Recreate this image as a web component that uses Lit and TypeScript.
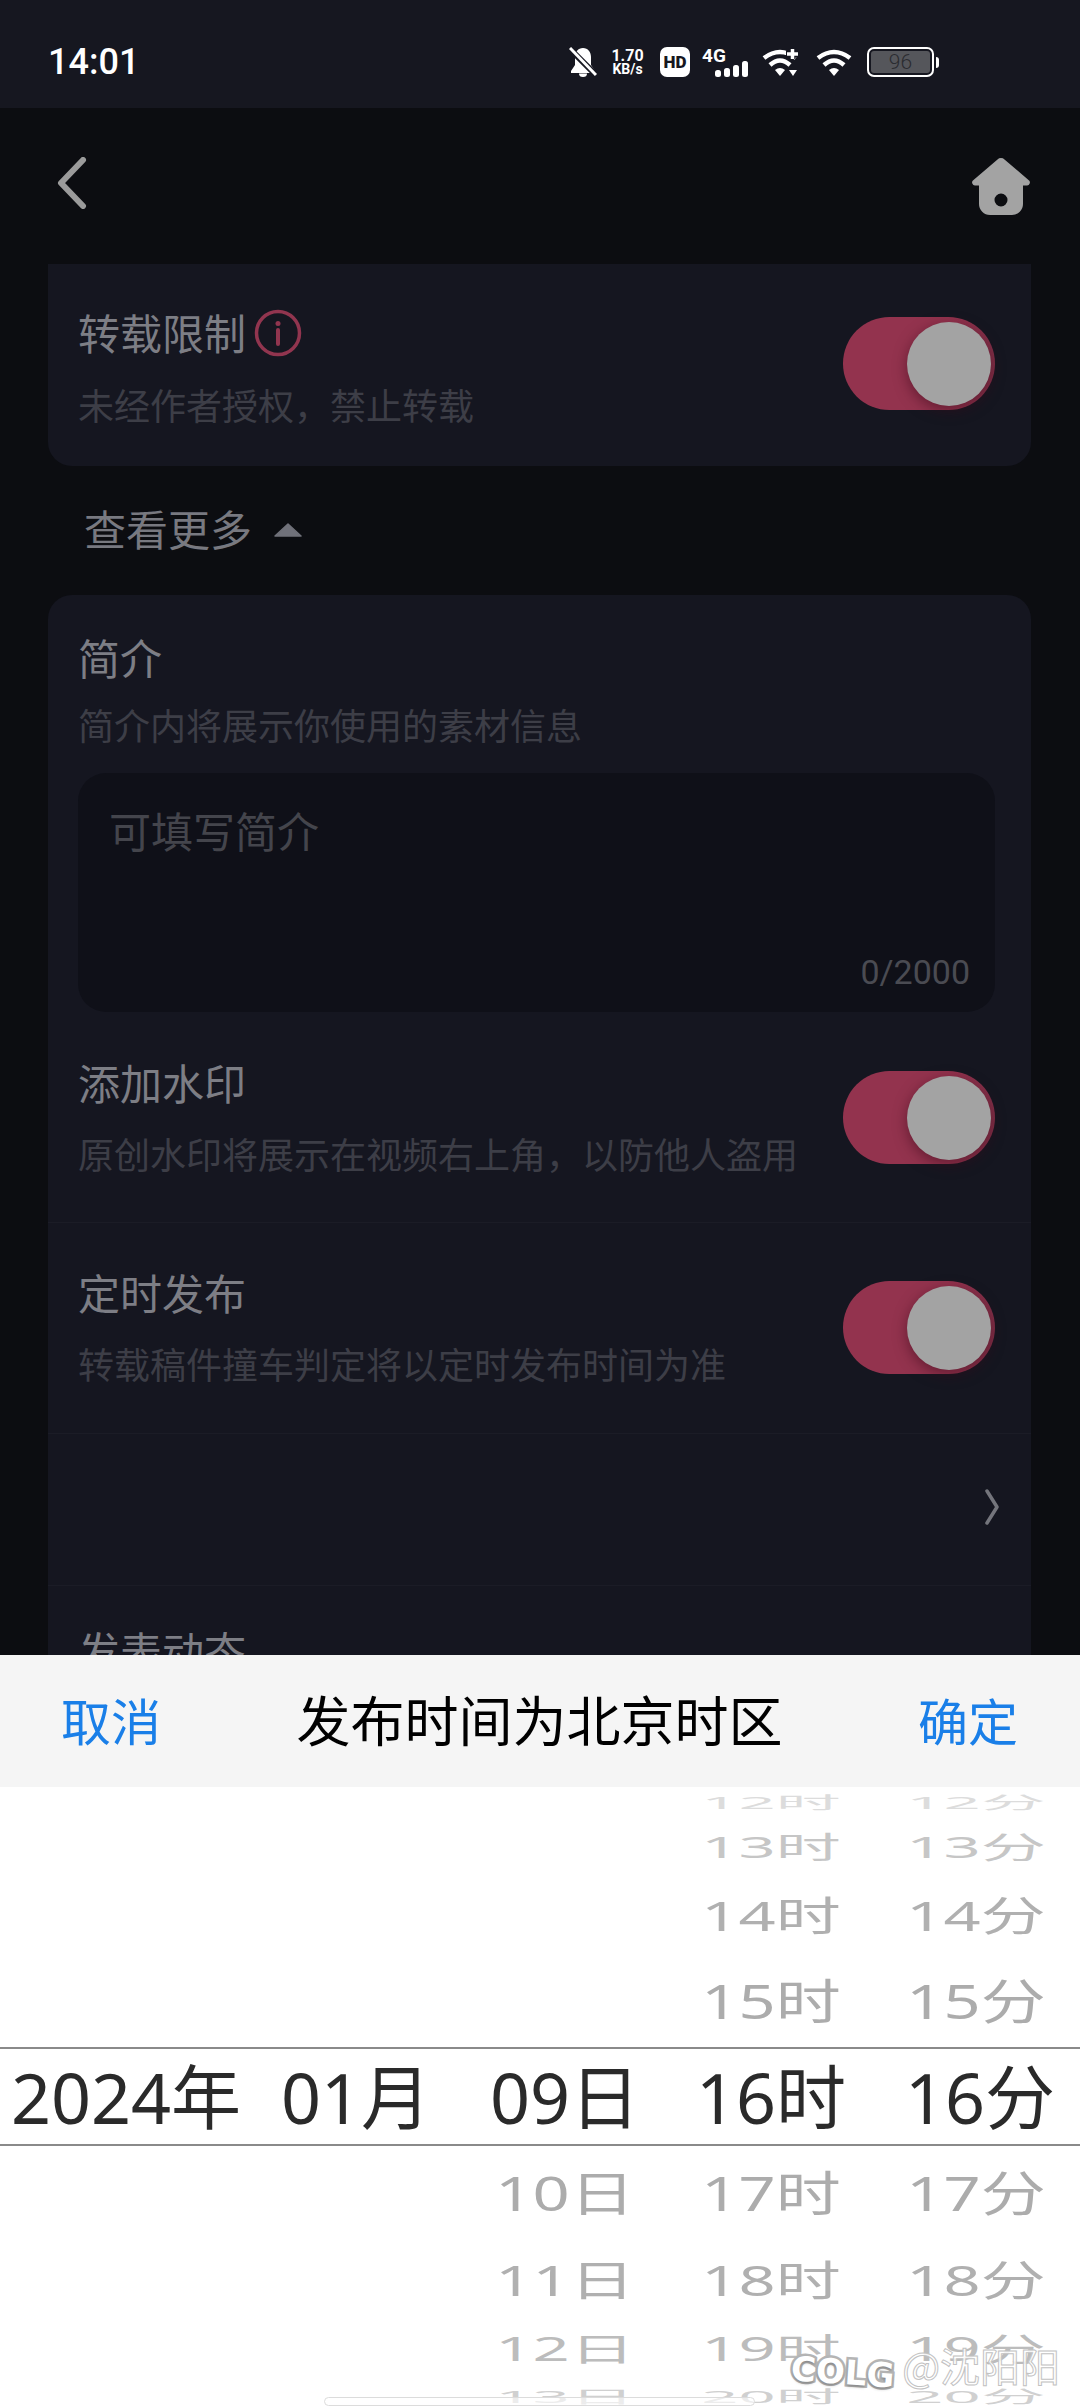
import { LitElement, html, css, svg } from "lit";
import { customElement } from "lit/decorators.js";

const wifiArcs = svg`<path d="M2 10Q18-2 34 10" fill="none" stroke="#fff" stroke-width="4.5"/><path d="M8 17Q18 8 28 17" fill="none" stroke="#fff" stroke-width="4.5"/><path d="M18 28l-5-6q5-4 10 0z" fill="#fff"/>`;

interface Row { h: number; scale: number; color: string; hour: string; minute: string; day?: string; }
const rows: Row[] = [
  { h: 32, scale: 0.26, color: "#dcdcdc", hour: "12时", minute: "12分" },
  { h: 56, scale: 0.46, color: "#c6c6c6", hour: "13时", minute: "13分" },
  { h: 80, scale: 0.63, color: "#b0b0b0", hour: "14时", minute: "14分" },
  { h: 92, scale: 0.74, color: "#acacac", hour: "15时", minute: "15分" },
  { h: 94, scale: 0.74, color: "#acacac", hour: "17时", minute: "17分", day: "10日" },
  { h: 80, scale: 0.65, color: "#b0b0b0", hour: "18时", minute: "18分", day: "11日" },
  { h: 58, scale: 0.49, color: "#bcbcbc", hour: "19时", minute: "19分", day: "12日" },
  { h: 36, scale: 0.26, color: "#d0d0d0", hour: "20时", minute: "20分", day: "13日" },
];

@customElement("app-root")
export class AppRoot extends LitElement {
  static styles = css`
    :host { display: flex; flex-direction: column; width: 1080px; height: 2408px; overflow: hidden; background: #0c0d11; font-family: "Noto Sans CJK SC", "Noto Sans", sans-serif; }
    .status { height: 108px; flex: none; background: #161720; display: flex; align-items: center; padding: 16px 0 0 48px; color: #fff; box-sizing: border-box; }
    .time { font: 500 36px Roboto, sans-serif; flex: 1; }
    .sicons { display: flex; align-items: center; margin-right: 141px; height: 30px; }
    .sicons svg { display: block; flex: none; }
    .speed { display: flex; flex-direction: column; align-items: center; font: 700 16px/15px Roboto, sans-serif; margin: 0 15px 0 13px; width: 35px; }
    .speed span + span { font-size: 14px; line-height: 13px; }
    .hd { width: 30px; height: 30px; border-radius: 7px; background: #fff; color: #161720; font: 900 17px/30px Roboto, sans-serif; text-align: center; }
    .net { position: relative; width: 47px; height: 30px; margin-left: 12px; }
    .net b { font: 700 19px/17px Roboto, sans-serif; display: block; }
    .net svg { position: absolute; right: 0; bottom: 0; }
    .batt { width: 67px; height: 30px; box-sizing: border-box; border: 2px solid #fff; border-radius: 7px; padding: 2px; }
    .batt span { display: block; height: 100%; border-radius: 3px; background: #55565b; color: #2a2b30; font: 300 21px/22px Roboto, sans-serif; text-align: center; }
    .nub { width: 3px; height: 11px; background: #fff; border-radius: 0 3px 3px 0; margin-left: 2px; }

    .nav { height: 156px; flex: none; display: flex; align-items: center; justify-content: space-between; padding: 0 50px 0 57px; box-sizing: border-box; }
    .nav .back { margin-top: -6px; }

    .content { flex: 1; min-height: 0; overflow: hidden; padding: 0 49px 0 48px; }
    .card { background: #151620; }
    .c1 { border-radius: 0 0 24px 24px; height: 202px; box-sizing: border-box; }
    .c2 { border-radius: 24px 24px 0 0; height: 1100px; }
    .more { height: 129px; display: flex; align-items: center; padding-left: 36px; gap: 22px; font-size: 42px; line-height: 48px; color: #787980; }
    .more span { margin-top: -5px; }
    .more svg { margin-top: -2px; }
    .row { display: flex; justify-content: space-between; padding: 0 36px 0 30px; border-bottom: 1px solid #1b1c26; box-sizing: border-box; }
    .row:last-child { border-bottom: none; }
    .title { font-size: 42px; line-height: 48px; color: #7d7e85; display: flex; align-items: center; gap: 8px; }
    .sub { font-size: 36px; line-height: 44px; color: #3d3e47; white-space: nowrap; }
    .r1 { padding-top: 42px; border: none; }
    .r1 .sub { margin-top: 25px; }
    .r1 .toggle { margin-top: 11px; }
    .r1 .title svg { margin-top: 3px; }
    .brief { padding: 38px 36px 0 30px; }
    .brief .sub { margin-top: 21px; }
    .ta { margin-top: 27px; height: 239px; box-sizing: border-box; background: #0f1018; border-radius: 28px; padding: 32px 25px 0 31px; display: flex; flex-direction: column; justify-content: space-between; }
    .ph { font-size: 42px; line-height: 50px; color: #44454c; }
    .count { align-self: flex-end; font: 400 34px/40px Roboto, sans-serif; color: #4a4b52; margin-bottom: 20px; }
    .r2 { height: 211px; padding-top: 46px; }
    .r3 { height: 211px; padding-top: 45px; }
    .r2 .sub, .r3 .sub { margin-top: 25px; }
    .r2 .toggle, .r3 .toggle { margin-top: 13px; }
    .r4 { height: 152px; align-items: center; justify-content: flex-end; padding-right: 31px; }
    .r4 svg { margin-top: -6px; }
    .r5 { padding-top: 40px; }
    .toggle { flex: none; width: 152px; height: 93px; border-radius: 47px; background: linear-gradient(90deg, #93334e 72%, #7f2f47 100%); display: flex; align-items: center; justify-content: flex-end; padding-right: 4px; box-sizing: border-box; }
    .knob { width: 84px; height: 84px; border-radius: 50%; background: #a3a3a3; box-shadow: 0 4px 14px rgba(60, 10, 25, .55); }

    .sheet { flex: none; height: 753px; position: relative; background: #fff; overflow: hidden; }
    .head { height: 132px; background: #f5f5f5; display: flex; align-items: center; justify-content: space-between; padding: 0 62px 5px 61px; box-sizing: border-box; }
    .btn { font-size: 50px; line-height: 60px; color: #1a7fe8; }
    .htitle { font-size: 54px; line-height: 60px; color: #000; }
    .picker { font-family: "Noto Sans", "Noto Sans CJK SC", sans-serif; }
    .prow { display: grid; grid-template-columns: 252px 208px 210px 202px 208px; justify-items: center; align-items: center; white-space: nowrap; font-size: 65px; }
    .prow span { display: block; }
    .prow span:last-child { transform: translateX(4px); }
    .sel { height: 99px; box-sizing: border-box; border-top: 2px solid #8a8a8a; border-bottom: 2px solid #8a8a8a; padding-top: 2px; font-size: 70px; color: #2a2a2a; line-height: 89px; }
    .wm { position: absolute; right: 20px; bottom: 19px; display: flex; align-items: center; gap: 8px; color: #fff; white-space: nowrap; }
    .colg { font: 700 34px/40px "DejaVu Sans", sans-serif; -webkit-text-stroke: 5px #b5b5b5; paint-order: stroke fill; letter-spacing: 0; transform: translateY(3px) rotate(4deg); text-shadow: 0 2px 3px rgba(0,0,0,.25); }
    .at { font: 400 40px/46px "Noto Sans CJK SC", sans-serif; -webkit-text-stroke: 1px #c2c2c2; color: rgba(255,255,255,.85); margin-top: -8px; }
    .indicator { position: absolute; left: 324px; bottom: 2px; width: 431px; height: 9px; box-sizing: border-box; border: 1.5px solid #dcdcdc; border-radius: 5px; background: rgba(255,255,255,.6); }
  `;

  private toggle() {
    return html`<div class="toggle"><div class="knob"></div></div>`;
  }

  render() {
    return html`
      <div class="status">
        <div class="time">14:01</div>
        <div class="sicons">
          <svg width="28" height="30" viewBox="0 0 28 30"><path d="M14 1c5 0 8 4 8 9v8l4 6v2H2v-2l4-6v-8c0-5 3-9 8-9z" fill="#fff"/><path d="M10 26.500h8a4 3.500 0 0 1-8 0z" fill="#fff"/><path d="M0 1l28 28" stroke="#161720" stroke-width="6"/><path d="M1 1l26 27" stroke="#fff" stroke-width="3"/></svg>
          <div class="speed"><span>1.70</span><span>KB/s</span></div>
          <div class="hd">HD</div>
          <div class="net"><b>4G</b><svg width="34" height="16" viewBox="0 0 34 16" fill="#fff"><rect x="0" y="9" width="6" height="7" rx="2.500"/><rect x="9" y="7" width="6" height="9" rx="2.500"/><rect x="18" y="4" width="6" height="12" rx="2.500"/><rect x="27" y="0" width="6" height="16" rx="2.500"/></svg></div>
          <svg style="margin-left:13px" width="38" height="28" viewBox="0 0 38 28">${wifiArcs}<path d="M24 6h12M30 0v11" stroke="#161720" stroke-width="7"/><path d="M25 6h11M30.500 1v10" stroke="#fff" stroke-width="3.500"/><path d="M27 22h8l-4 6z" fill="#fff"/></svg>
          <svg style="margin:0 15px 0 16px" width="36" height="28" viewBox="0 0 36 28">${wifiArcs}</svg>
          <div class="batt"><span>96</span></div>
          <div class="nub"></div>
        </div>
      </div>
      <div class="nav">
        <svg class="back" width="30" height="52" viewBox="0 0 30 52"><path d="M26 3L4 26l22 23" fill="none" stroke="#9b9b9b" stroke-width="6" stroke-linecap="round" stroke-linejoin="round"/></svg>
        <svg width="58" height="57" viewBox="0 0 58 57"><path fill-rule="evenodd" d="M25.500 1.500a5 5 0 0 1 7 0L56.500 22a3 3 0 0 1-2 5.500H51V46a11 11 0 0 1-11 11H18A11 11 0 0 1 7 46V27.500H3.500a3 3 0 0 1-2-5.500zM29 35.500a6.500 6.500 0 1 0 0 13 6.500 6.500 0 0 0 0-13z" fill="#a3a3a3"/></svg>
      </div>
      <div class="content">
        <div class="card c1">
          <div class="row r1">
            <div>
              <div class="title">转载限制
                <svg width="48" height="48" viewBox="0 0 48 48"><circle cx="24" cy="24" r="21.500" fill="none" stroke="#91354f" stroke-width="3.500"/><circle cx="24" cy="14.500" r="2.500" fill="#91354f"/><path d="M24 21v14" stroke="#91354f" stroke-width="4" stroke-linecap="round"/></svg>
              </div>
              <div class="sub">未经作者授权，禁止转载</div>
            </div>
            ${this.toggle()}
          </div>
        </div>
        <div class="more"><span>查看更多</span><svg width="28" height="14" viewBox="0 0 28 14"><path d="M14 1L27 13H1z" fill="#70717a" stroke="#70717a" stroke-width="1.500" stroke-linejoin="round"/></svg></div>
        <div class="card c2">
          <div class="brief">
            <div class="title">简介</div>
            <div class="sub">简介内将展示你使用的素材信息</div>
            <div class="ta"><div class="ph">可填写简介</div><div class="count">0/2000</div></div>
          </div>
          <div class="row r2">
            <div><div class="title">添加水印</div><div class="sub">原创水印将展示在视频右上角，以防他人盗用</div></div>
            ${this.toggle()}
          </div>
          <div class="row r3">
            <div><div class="title">定时发布</div><div class="sub">转载稿件撞车判定将以定时发布时间为准</div></div>
            ${this.toggle()}
          </div>
          <div class="row r4"><svg width="16" height="36" viewBox="0 0 16 36"><path d="M3 2l10 16L3 34" fill="none" stroke="#74757c" stroke-width="3.500" stroke-linecap="round" stroke-linejoin="round"/></svg></div>
          <div class="row r5"><div class="title">发表动态</div></div>
        </div>
      </div>
      <div class="sheet">
        <div class="head"><div class="btn">取消</div><div class="htitle">发布时间为北京时区</div><div class="btn">确定</div></div>
        <div class="picker">
          ${rows.slice(0, 4).map((r) => this.renderRow(r))}
          <div class="prow sel"><span>2024年</span><span>01月</span><span>09日</span><span>16时</span><span>16分</span></div>
          ${rows.slice(4).map((r) => this.renderRow(r))}
        </div>
        <div class="wm"><span class="colg">COLG</span><span class="at">@沈阳阳</span></div>
        <div class="indicator"></div>
      </div>
    `;
  }

  private renderRow(r: Row) {
    const st = `height:${r.h}px;line-height:${r.h}px;color:${r.color}`;
    const tf = `transform:scaleY(${r.scale})`;
    const tf2 = `transform:translateX(0) scaleY(${r.scale})`;
    return html`<div class="prow" style=${st}>
      <span></span><span></span>
      <span style=${tf}>${r.day ?? ""}</span>
      <span style=${tf2}>${r.hour}</span>
      <span style=${tf2}>${r.minute}</span>
    </div>`;
  }
}
